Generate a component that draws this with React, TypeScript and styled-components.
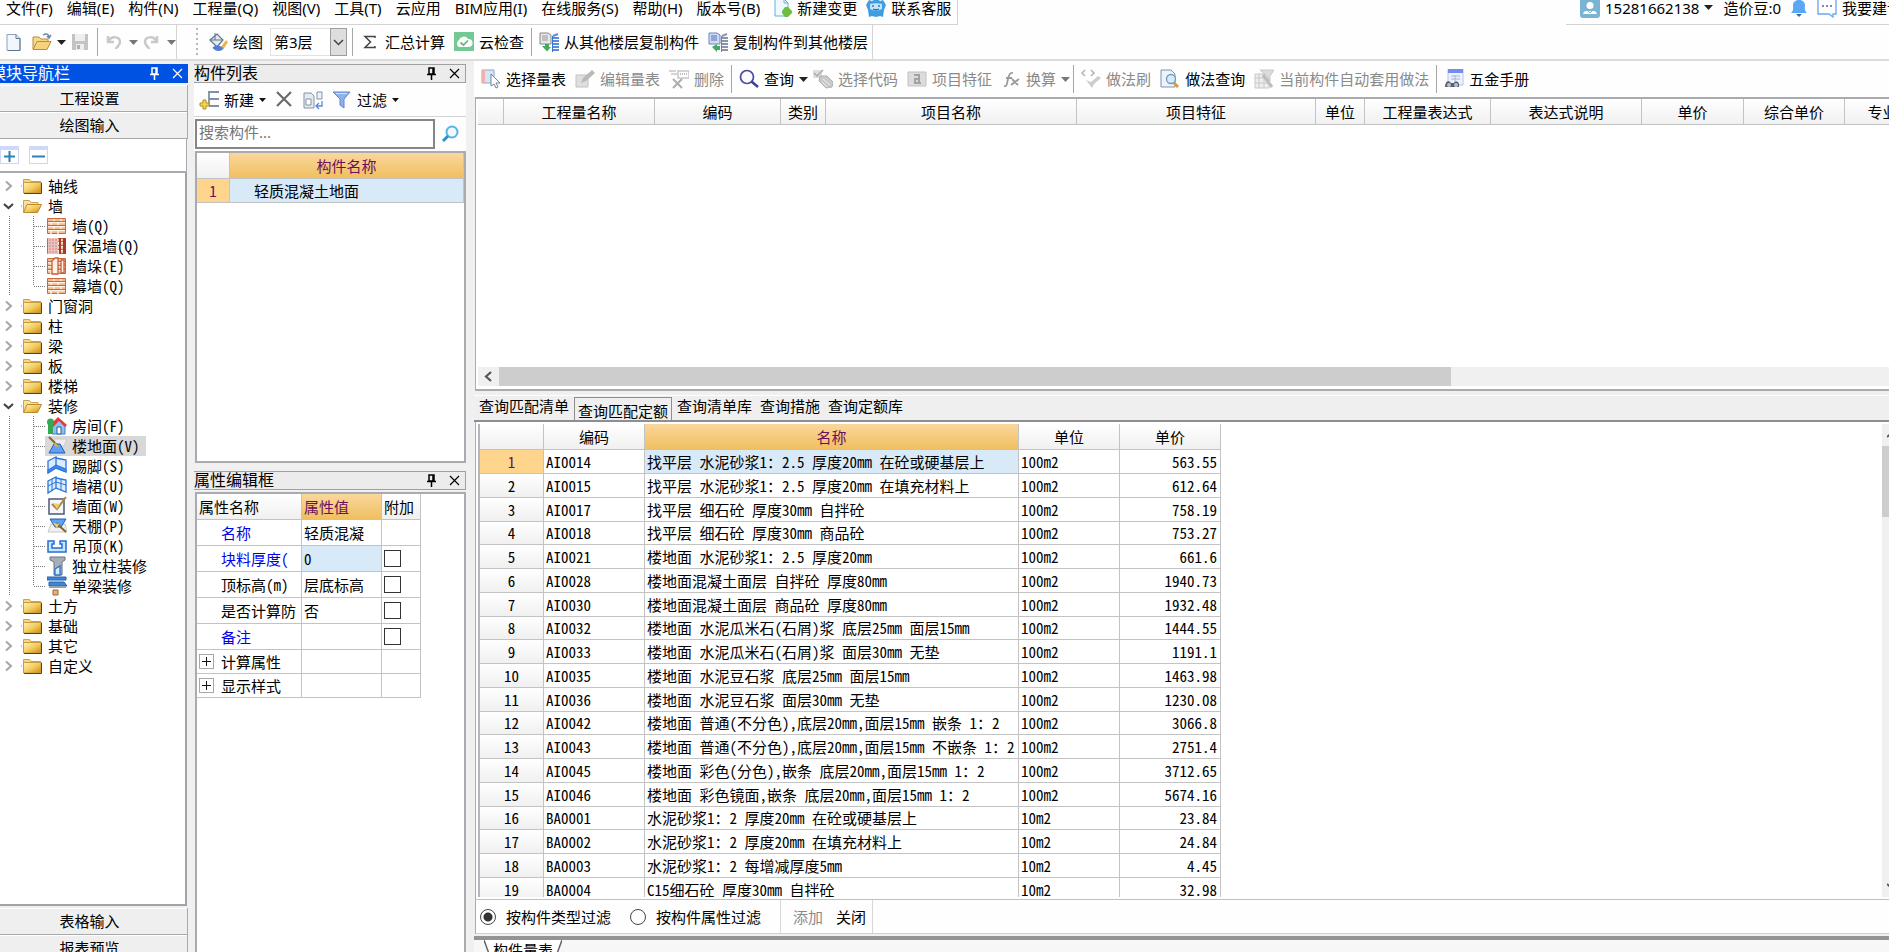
import React, { useState } from "react";
import styled, { createGlobalStyle, css } from "styled-components";

const uiFont = `"Noto Sans", "Noto Sans CJK SC", sans-serif`;
const gridFont = `"Noto Sans Mono CJK SC", "Noto Sans CJK SC", monospace`;

const color = {
  line: "#c3c3c3",
  frame: "#a9abb0",
  chrome: "#f0f0f0",
  paper: "#fefefe",
  amber: "#ffd48c",
  pick: "#d8e9f7",
  plum: "#6b0f5c",
  off: "#8a8a8a",
};

const headFill = "linear-gradient(#ffffff, #f0f0f0)";
const amberFill = "linear-gradient(#fad79c, #f0bf60)";

const GlobalStyle = createGlobalStyle`
  * { box-sizing: border-box; }
  body { margin: 0; background: ${color.chrome}; overflow: hidden; }
  button, input, select { font: inherit; color: inherit; margin: 0; }
  button { border: 0; background: none; padding: 0; white-space: nowrap; }
  svg { display: block; flex: none; }
`;

const Window = styled.div`
  height: 100vh;
  overflow: hidden;
  font: 15px/20px ${uiFont};
  color: #000;
`;

const Frame = styled.div`
  height: calc(100vh + 10px);
  display: flex;
  flex-direction: column;
`;

/* ---------- top bars ---------- */

const MenuRow = styled.header`
  flex: none;
  display: flex;
  justify-content: space-between;
  height: 25px;
  line-height: 16px;
  background: ${color.paper};
`;

const MenuBar = styled.nav`
  display: flex;
  align-items: center;
  padding: 0 6px 9px;
  gap: 14px;
  border: solid #d4d4d4;
  border-width: 0 1px 1px 0;
`;

const MenuButton = styled.button`
  height: 16px;
`;

const MenuTools = styled.div`
  display: flex;
  margin: 0 -4px 0 -7px;
`;

const AccountBar = styled.div`
  display: flex;
  align-items: center;
  gap: 5px;
  width: 323px;
  padding: 0 0 9px 3px;
  border-bottom: 1px solid #d4d4d4;
  white-space: nowrap;
`;

const AccountGrip = styled.span`
  width: 2px;
  height: 16px;
  margin-right: 6px;
  background: repeating-linear-gradient(#b8b8b8 0 2px, transparent 2px 5px);
`;

const AccountItem = styled.button`
  display: flex;
  align-items: center;
  gap: 5px;
  height: 16px;
  margin-right: 5px;
`;

const Bar = styled.div`
  flex: none;
  display: flex;
  height: 36px;
  background: ${color.paper};
  border-bottom: 2px solid #dcdcdc;
`;

const BarGroup = styled.div`
  display: flex;
  align-items: center;
  border-right: 1px solid #d4d4d4;
`;

const Grip = styled.span`
  width: 2px;
  height: 28px;
  margin: 0 5px 0 19px;
  background: repeating-linear-gradient(#b8b8b8 0 2px, transparent 2px 5px);
`;

const Separator = styled.span`
  flex: none;
  width: 1px;
  height: 28px;
  margin: 0 2px 0 3px;
  background: #a6a6a6;
`;

const ToolButton = styled.button<{ $drop?: boolean; $low?: boolean }>`
  display: flex;
  align-items: center;
  gap: 5px;
  height: ${(p) => (p.$low ? 16 : 28)}px;
  padding: 0 ${(p) => (p.$drop ? 0 : 4)}px 0 5px;
  &:disabled { color: ${color.off}; }
`;

const IconButton = styled.button<{ $drop?: boolean }>`
  display: flex;
  align-items: center;
  gap: 5px;
  padding: 0 ${(p) => (p.$drop ? 0 : 4)}px 0 4px;
`;

const FloorPicker = styled.label`
  position: relative;
  margin: 0 2px 0 3px;
  width: 77px;
  height: 28px;
`;

const FloorSelect = styled.select`
  appearance: none;
  width: 100%;
  height: 28px;
  padding: 0 18px 0 3px;
  border: 1px solid #e2e2e2;
  border-radius: 0;
  background: #fff;
`;

const FloorArrow = styled.span`
  position: absolute;
  top: 0;
  right: 0;
  display: grid;
  place-items: center;
  width: 17px;
  height: 28px;
  background: #dedede;
  border: 1px solid #9d9d9d;
  pointer-events: none;
`;

/* ---------- workspace ---------- */

const Workspace = styled.div`
  flex: 1;
  min-height: 0;
  display: flex;
  background: ${color.chrome};
`;

const NavColumn = styled.aside`
  flex: none;
  width: 188px;
  padding-top: 3px;
  display: flex;
  flex-direction: column;
`;

const MidColumn = styled.section`
  flex: none;
  width: 272px;
  margin: 0 8px 0 6px;
  padding-top: 3px;
  display: flex;
  flex-direction: column;
`;

const PanelTitle = styled.div<{ $active?: boolean }>`
  flex: none;
  display: flex;
  align-items: center;
  gap: 12px;
  height: 19px;
  padding-right: 5px;
  font-size: 16px;
  line-height: 17px;
  overflow: hidden;
  white-space: nowrap;
  ${(p) =>
    p.$active
      ? css`
          background: #0053e2;
          color: #fff;
        `
      : css`
          background: #ececec;
          border: 1px solid #a0a0a0;
          border-left: 0;
        `}
`;

const TitleText = styled.h2<{ $shift?: boolean }>`
  flex: 1;
  margin: 0 0 0 ${(p) => (p.$shift ? -10 : 0)}px;
  font: inherit;
`;

const NavSection = styled.button`
  flex: none;
  height: 27px;
  padding-right: 8px;
  text-align: center;
  background: #efefef;
  border: solid #a9a9a9;
  border-width: 0 1px 1px 0;
  box-shadow: inset 0 1px #fff;
`;

const NavTop = styled.div`
  flex: none;
  display: flex;
  flex-direction: column;
  padding-top: 2px;
`;

const FoldBar = styled.div`
  flex: none;
  display: flex;
  align-items: center;
  gap: 10px;
  height: 34px;
  margin-right: 1px;
  background: #fff;
  border: solid #a9abb0;
  border-width: 0 1px 2px 0;
`;

const FoldButton = styled.button`
  display: grid;
  place-items: center;
  width: 19px;
  height: 18px;
  background: #fff;
  border: 1px solid #cdd6fa;
  border-top: 4px solid #cdd8fb;
`;

const Tree = styled.ul`
  flex: 1;
  min-height: 0;
  overflow: hidden;
  margin: 0 1px 2px 0;
  padding: 3px 0 0;
  list-style: none;
  background: #fff;
  border: solid #a0a3aa;
  border-width: 0 2px 2px 0;
  font-family: ${gridFont};
`;

const Branch = styled.button`
  display: flex;
  align-items: center;
  height: 20px;
  padding-left: 3px;
  gap: 6px;
`;

const Twigs = styled.ul`
  margin: 0;
  padding: 0;
  list-style: none;
`;

const Twig = styled.li`
  display: flex;
  height: 20px;
`;

const Leaf = styled.button<{ $on?: boolean }>`
  display: flex;
  align-items: center;
  gap: 5px;
  height: 20px;
  padding: 0 6px 0 2px;
  background: ${(p) => (p.$on ? "#d8d8d8" : "transparent")};
`;

/* ---------- component list and properties ---------- */

const ListTools = styled.div`
  flex: none;
  display: flex;
  align-items: center;
  height: 34px;
  background: ${color.paper};
  border-bottom: 1px solid #d4d4d4;
`;

const SearchRow = styled.form`
  flex: none;
  display: flex;
  align-items: center;
  gap: 6px;
  height: 34px;
  padding-left: 1px;
  background: ${color.paper};
`;

const SearchInput = styled.input`
  width: 240px;
  height: 30px;
  padding: 0 2px 4px;
  border: 2px solid #868686;
  border-radius: 0;
  background: #fff;
  &::placeholder { color: #767676; opacity: 1; }
`;

const ListBox = styled.div`
  flex: none;
  height: 312px;
  margin: 0 0 8px 1px;
  background: #fff;
  border: 2px solid ${color.frame};
`;

const PropertyBox = styled.div`
  flex: 1;
  margin: 2px 0 0 1px;
  background: #fff;
  border: 2px solid ${color.frame};
`;

const Grid = styled.table`
  table-layout: fixed;
  border-collapse: separate;
  border-spacing: 0;
  width: 0;
  font: 15px/20px ${gridFont};
`;

const Head = styled.th<{ $amber?: boolean; $start?: boolean }>`
  height: 26px;
  padding: 0 2px;
  overflow: hidden;
  white-space: nowrap;
  font-weight: 400;
  text-align: ${(p) => (p.$start ? "left" : "center")};
  color: ${(p) => (p.$amber ? color.plum : "#000")};
  background: ${(p) => (p.$amber ? amberFill : headFill)};
  border: solid ${color.line};
  border-width: 0 1px 1px 0;
`;

const Row = styled.tr`
  height: 24px;
`;

const PriceRow = styled(Row)`
  &:nth-child(4n) { height: 23px; }
`;

const PropRow = styled.tr<{ $group?: boolean }>`
  height: ${(p) => (p.$group ? 24 : 26)}px;
`;

const Cell = styled.td<{ $on?: boolean; $end?: boolean; $indent?: boolean; $link?: boolean }>`
  padding: 0 3px 0 ${(p) => (p.$indent ? 24 : 2)}px;
  overflow: hidden;
  white-space: nowrap;
  text-align: ${(p) => (p.$end ? "right" : "left")};
  color: ${(p) => (p.$link ? "#0000f0" : "#000")};
  background: ${(p) => (p.$on ? color.pick : "#fff")};
  border: solid ${color.line};
  border-width: 0 1px 1px 0;
`;

const Index = styled.th<{ $on?: boolean }>`
  padding: 0;
  font-weight: 400;
  text-align: center;
  color: ${(p) => (p.$on ? color.plum : "#000")};
  background: ${(p) => (p.$on ? color.amber : headFill)};
  border: solid ${color.line};
  border-width: 0 1px 1px 0;
`;

const GroupLabel = styled.div`
  display: flex;
  align-items: center;
  gap: 7px;
`;

const Expand = styled.button`
  display: grid;
  place-items: center;
  width: 15px;
  height: 15px;
  background: #fff;
  border: 1px solid #a8a8a8;
`;

const Tick = styled.input`
  appearance: none;
  display: block;
  width: 17px;
  height: 17px;
  background: #fff;
  border: 1px solid #333;
`;

/* ---------- right side ---------- */

const MainColumn = styled.main`
  flex: 1;
  min-width: 0;
  display: flex;
  flex-direction: column;
`;

const MainTools = styled.div`
  flex: none;
  display: flex;
  align-items: center;
  height: 36px;
  padding-left: 2px;
  background: ${color.paper};
  overflow: hidden;
`;

const SheetBox = styled.div`
  flex: none;
  height: 294px;
  display: flex;
  flex-direction: column;
  margin-left: 1px;
  padding-left: 2px;
  background: #fff;
  border: solid ${color.frame};
  border-width: 2px 0 2px 1px;
  overflow: hidden;
`;

const SheetArea = styled.div`
  flex: 1;
  overflow: hidden;
`;

const HScroll = styled.div`
  flex: none;
  display: flex;
  height: 19px;
  margin-bottom: 3px;
  background: ${color.chrome};
`;

const HArrow = styled.button`
  display: grid;
  place-items: center;
  width: 21px;
`;

const HThumb = styled.div`
  width: 67.5%;
  background: #cdcdcd;
`;

const TabStrip = styled.div`
  flex: none;
  display: flex;
  gap: 2px;
  height: 27px;
  margin-top: 4px;
  padding: 0 0 0 2px;
  background: #efefef;
  border-bottom: 2px solid #8e8e92;
  box-shadow: inset 0 1px #fff;
  font-family: ${gridFont};
`;

const Tab = styled.button<{ $on?: boolean }>`
  padding: 0 3px;
  ${(p) =>
    p.$on
      ? css`
          margin-top: 2px;
          padding-top: 3px;
          border: solid #8e8e8e;
          border-width: 1px 1px 0;
        `
      : css`
          padding-bottom: 3px;
        `}
`;

const PriceBox = styled.div`
  flex: 1;
  min-height: 0;
  display: flex;
  justify-content: space-between;
  margin: 0 -11px 0 1px;
  padding: 2px 0 2px 2px;
  background: #fff;
  border-left: 1px solid ${color.frame};
  border-bottom: 1px solid #c0c0c0;
`;

const PriceArea = styled.div`
  border-left: 2px solid #b4b6ba;
  overflow: hidden;
`;

const VScroll = styled.div`
  display: flex;
  flex-direction: column;
  width: 18px;
  background: ${color.chrome};
`;

const VArrow = styled.button`
  display: grid;
  place-items: center;
  height: 22px;
`;

const VThumb = styled.div`
  height: 71px;
  margin-bottom: auto;
  background: #cdcdcd;
`;

const FilterBar = styled.form`
  flex: none;
  display: flex;
  align-items: stretch;
  height: 34px;
  margin-left: 1px;
  padding-left: 4px;
  background: ${color.paper};
  border-left: 1px solid ${color.frame};
  border-bottom: 1px solid #d0d0d0;
  font-family: ${gridFont};
`;

const Choice = styled.label`
  display: flex;
  align-items: center;
  gap: 10px;
  margin-right: 19px;
`;

const Radio = styled.input`
  appearance: none;
  width: 16px;
  height: 16px;
  border: 1px solid #444;
  border-radius: 50%;
  background: #fff;
  &:checked { background: radial-gradient(#333 0 4px, #fff 5px); }
`;

const FilterActions = styled.div`
  display: flex;
  align-items: center;
  gap: 13px;
  padding: 0 6px 0 12px;
  border: solid #d8d8d8;
  border-width: 0 1px;
  font-family: ${uiFont};
`;

const PlainButton = styled.button`
  &:disabled { color: ${color.off}; }
`;

const BottomTabs = styled.div`
  flex: none;
  display: flex;
  height: 26px;
  margin-top: 2px;
  padding-left: 10px;
  background: #f7f7f7;
  border-top: 4px solid #949494;
`;

const BottomTab = styled.button`
  display: flex;
  align-items: flex-start;
  height: 22px;
  font-family: ${gridFont};
`;

const BottomTabText = styled.span`
  height: 22px;
  padding: 0 1px;
  line-height: 20px;
  background: #fff;
`;

/* ---------- drawings ---------- */

const Svg = ({ children, w = 20, h = 20 }: { children: React.ReactNode; w?: number; h?: number }) => (
  <svg width={w} height={h} viewBox={`0 0 ${w} ${h}`} fill="none" aria-hidden="true">
    {children}
  </svg>
);

const Caret = ({ tone = "#222" }) => (
  <Svg w={9} h={5}><path d="M0 0h9L4.500 5z" fill={tone} /></Svg>
);
const SmallCaret = () => (
  <Svg w={7} h={4}><path d="M0 0h7L3.500 4z" fill="#111" /></Svg>
);
const Pin = () => (
  <Svg w={11} h={13}>
    <path d="M3 1h5v6H3zM1 7.500h9M5.500 8v5M7 1v6" stroke="currentColor" strokeWidth="1.500" />
  </Svg>
);
const Cross = () => (
  <Svg w={11} h={11}><path d="M1 1l9 9M10 1l-9 9" stroke="currentColor" strokeWidth="1.200" /></Svg>
);
const Chevron = ({ open }: { open?: boolean }) =>
  open ? (
    <Svg w={11} h={12}><path d="M1 4l4.500 4L10 4" stroke="#444" strokeWidth="2.200" /></Svg>
  ) : (
    <Svg w={11} h={12}><path d="M3 1.500L8 6l-5 4.500" stroke="#a6a6a6" strokeWidth="2" /></Svg>
  );

const Folder = ({ open }: { open?: boolean }) => (
  <Svg w={22} h={18}>
    <defs>
      <linearGradient id="fold" x1="0" y1="0" x2="1" y2="1">
        <stop offset="0" stopColor="#fff3b8" />
        <stop offset=".5" stopColor="#f3cd60" />
        <stop offset="1" stopColor="#d08a10" />
      </linearGradient>
    </defs>
    <path d="M-1 9h4" stroke="#888" strokeDasharray="1 1" />
    {open ? (
      <>
        <path d="M3.500 15V3.500h6l1.500 2h7V8" fill="#f8e19a" stroke="#c9a452" />
        <path d="M3.500 15.500L7 7.500h14.500l-4 8z" fill="url(#fold)" stroke="#b98a2e" />
      </>
    ) : (
      <>
        <path d="M3.500 2.500h6l1.500 2h10v11h-17.500z" fill="#f3d88c" stroke="#c9a452" />
        <path d="M3.500 5.500h17.500v10.500H3.500z" fill="url(#fold)" stroke="#c99b3a" />
        <path d="M4 16.500h17.500V6" stroke="#54451f" />
      </>
    )}
  </Svg>
);

const Guides = ({ last }: { last?: boolean }) => (
  <Svg w={45} h={20}>
    <path d={`M9.500 0V20M33.500 0V${last ? 10 : 20}M34 10.500H45`} stroke="#777" strokeDasharray="1 1" />
  </Svg>
);

const NewDoc = () => (
  <Svg>
    <path d="M3 2.500h9l4 4v12H3z" fill="#f3f7fc" stroke="#8ea3bb" />
    <path d="M12 2.500v4h4v12H4" stroke="#5c7692" />
  </Svg>
);
const OpenDoc = () => (
  <Svg>
    <path d="M1 17V5h6l2 2h7v3" fill="#f5d88b" stroke="#b98f35" />
    <path d="M1 17.500l4-8h14l-4 8z" fill="#f7d27a" stroke="#b98f35" />
    <path d="M11 3c3-2 6-1 6 2M15 4l2 2 2-3" stroke="#6a86a8" strokeWidth="1.500" />
  </Svg>
);
const Disk = () => (
  <Svg>
    <path d="M2 2h16v16H2z" fill="#c4c4c4" />
    <path d="M5 2h10v7H5zM6 12h8v6H6z" fill="#eee" />
    <path d="M7 13h3v4H7z" fill="#b0b0b0" />
  </Svg>
);
const Undo = () => (
  <Svg><path d="M4 4v6h6M5 9c2-5 11-5 11 1 0 4-4 5-4 7" stroke="#c9c9c9" strokeWidth="2.500" /></Svg>
);
const Redo = () => (
  <Svg><path d="M15 4v6H9M14 9C12 4 3 4 3 10c0 4 4 5 4 7" stroke="#c9c9c9" strokeWidth="2.500" /></Svg>
);
const Bucket = () => (
  <Svg>
    <path d="M2 8l7-6 6 6-6 7z" fill="#e3e9ef" stroke="#61758c" strokeWidth="1.200" />
    <path d="M7 1v7M2 8h12" stroke="#61758c" />
    <path d="M12 16l6-8 2 2-5 8z" fill="#e9b552" />
    <path d="M7 14c3-1 6 0 8 2 0 3-5 4-8 2s-3-3 0-4z" fill="#4f7fd0" />
  </Svg>
);
const Sigma = () => (
  <Svg><path d="M15 6V4.500H5l5.500 5.500L5 15.500h10V14" stroke="#444" strokeWidth="1.500" /></Svg>
);
const CloudCheck = () => (
  <Svg>
    <path d="M0 0h20v19H0z" fill="#73c991" />
    <path d="M5 15a4 4 0 010-7 5 5 0 019-1 4 4 0 011 8z" fill="#fff" />
    <path d="M6.500 10.500l3 2.500 4.500-4.500" stroke="#5cb87d" strokeWidth="1.700" />
  </Svg>
);
const FloorCopy = ({ to }: { to?: boolean }) => (
  <Svg>
    <path d="M1 1h8l3 2v9H1z" fill={to ? "#cfdcf5" : "#e8e8e8"} stroke={to ? "#6d83bd" : "#888"} />
    <path d="M3 4h6M3 6h6M3 8h6" stroke={to ? "#5470b5" : "#999"} />
    <path d="M14 4l5-2M14 6h6M14 9h6M14 12h6M14 15h6M14 18h6" stroke={to ? "#8997ab" : "#5b8bd8"} strokeWidth="2" />
    <path d="M13.500 4v16" stroke={to ? "#71839c" : "#3b74cf"} />
    <path d={to ? "M4 15l5-3v2h3v4H9v2z" : "M3 14h3v-2h4v3h2l-4 4.500z"} fill="#43ad5f" />
  </Svg>
);
const DocPlus = () => (
  <Svg>
    <path d="M3 1h9l4 4v13H3z" fill="#eef8ff" stroke="#69aee0" />
    <path d="M12 1v4h4" stroke="#69aee0" />
    <path d="M13 9h3l4 4v2l-4 4h-3l-3-4v-2z" fill="#6cbf3c" />
  </Svg>
);
const Mascot = () => (
  <Svg>
    <path d="M3 2l3 1c3-2 6-2 8 0l3-1 3 5-2 5-1 7-3-1-4 1-4-1-3 1-1-7-2-5z" fill="#3f9ee2" />
    <path d="M4 6c4-1 8-1 12 0v5c-4 2-8 2-12 0z" fill="#bfe4fb" />
    <path d="M7 7v2M13 7v2M7 11c2 1 4 1 6 0" stroke="#1f6cae" strokeWidth="1.300" />
  </Svg>
);
const Avatar = () => (
  <Svg>
    <rect width="20" height="20" rx="3" fill="#7ab4d2" />
    <circle cx="10" cy="7.500" r="3.500" fill="#fff" />
    <path d="M3 16c1-4 4-3 7-3s6-1 7 3z" fill="#fff" />
    <path d="M8 13l2 2 2-2" stroke="#7ab4d2" />
  </Svg>
);
const Bell = () => (
  <Svg w={16}>
    <path d="M0 15c3-3 2-5 2-8 0-3 3-5 6-5s6 2 6 5c0 3-1 5 2 8z" fill="#5aa7f5" />
    <path d="M5 16h6l-3 3z" fill="#3a6ea8" />
  </Svg>
);
const Bubble = () => (
  <Svg>
    <path d="M1 1h18v15h-3v3l-4-3H1z" fill="#fff" stroke="#6aa6ea" strokeWidth="1.300" />
    <path d="M5 8h10" stroke="#555fae" strokeWidth="1.500" strokeDasharray="2 2" />
  </Svg>
);

const PickTable = () => (
  <Svg>
    <path d="M1 1h12v13H1z" fill="#d5e4f7" stroke="#90a7c6" />
    <path d="M1 1h3v13H1z" fill="#edb2ab" />
    <path d="M10 5v12l3-2 2 4 2-1-2-4h4z" fill="#fff" stroke="#71839d" />
  </Svg>
);
const EditTable = () => (
  <Svg>
    <path d="M1 6h12v12H1z" fill="#dedede" stroke="#c2c2c2" />
    <path d="M6 14l2-5 9-8 3 3-9 8z" fill="#b9b9b9" />
  </Svg>
);
const DeleteRow = () => (
  <Svg>
    <path d="M0 2h7M2 5h6M9 2h11v7H9z" stroke="#c6c6c6" strokeWidth="1.500" />
    <path d="M11 5h8" stroke="#bdbdbd" strokeDasharray="1 1" strokeWidth="2" />
    <path d="M4 10l9 9M13 10l-9 9" stroke="#adadad" strokeWidth="2" />
  </Svg>
);
const Lens = () => (
  <Svg>
    <circle cx="8" cy="8" r="6.500" fill="#fafaff" stroke="#4a48a8" strokeWidth="1.700" />
    <path d="M12.500 12.500L19 18" stroke="#3f3f9c" strokeWidth="2.500" />
  </Svg>
);
const PickCode = () => (
  <Svg>
    <path d="M0 1h9v8H0z" fill="#dedede" />
    <path d="M1 4l3 3 6-6" stroke="#aaa" strokeWidth="1.500" />
    <path d="M7 7h7l6 6-1 5-6 1-7-7z" fill="#c9c9c9" stroke="#b0b0b0" />
    <path d="M10 10l7 6M9 13l5 5" stroke="#eee" />
  </Svg>
);
const Feature = () => (
  <Svg>
    <path d="M1 3h18v14H1z" fill="#dcdcdc" stroke="#c2c2c2" />
    <path d="M7 6h5v8H8v-4h4M12 14h2" stroke="#a2a2a2" strokeWidth="2" />
  </Svg>
);
const Fx = () => (
  <Svg>
    <path d="M3 17c3 1 3-3 4-7s2-7 5-6M5 9h6M11 10l6 6M18 10l-8 6" stroke="#9a9a9a" strokeWidth="1.800" />
  </Svg>
);
const Brush = () => (
  <Svg>
    <path d="M4 1L1 4l3 3M10 1l3 3-3 3" stroke="#b3b3b3" strokeWidth="1.500" />
    <path d="M5 11l5 2 7-6 3 2-7 6-2 4z" fill="#cdcdcd" />
  </Svg>
);
const DocLens = () => (
  <Svg>
    <path d="M1 1h10l4 4v13H1z" fill="#edf3fb" stroke="#7d93b0" />
    <circle cx="11" cy="10" r="4.500" fill="#d4ecfb" stroke="#7896b5" strokeWidth="1.300" />
    <path d="M14 14l4 4" stroke="#e09a35" strokeWidth="3" />
  </Svg>
);
const AutoApply = () => (
  <Svg>
    <path d="M1 5h14v14H1zM1 9h14M1 14h14M5 5v14M10 5v14" fill="#eee" stroke="#c8c8c8" />
    <path d="M6 1h14l-4 6v5l-3-5z" fill="#dcdcdc" stroke="#c8c8c8" />
    <path d="M9 6l9 12" stroke="#bcbcbc" strokeWidth="3" />
  </Svg>
);
const Manual = () => (
  <Svg>
    <path d="M4 0h15v16H4z" fill="#eef2ff" stroke="#b6c2ee" />
    <path d="M4 0h15v4H4z" fill="#6f8ff0" />
    <path d="M7 7h9M7 10h9M11 6v8" stroke="#a8b2d0" />
    <path d="M1 18c0-6 4-7 6-4h3c2-3 6-1 5 4z" fill="#58606c" />
    <circle cx="5" cy="16" r="2" fill="#b9c2cd" /><circle cx="12" cy="16" r="2" fill="#b9c2cd" />
  </Svg>
);
const AddItem = () => (
  <Svg>
    <path d="M9 2h11M10 2v14M10 9h10M10 16h10" stroke="#7d92a8" strokeWidth="1.800" />
    <path d="M4 10h3v3h3v3H7v3H4v-3H1v-3h3z" fill="#f5d44c" stroke="#b18e20" />
  </Svg>
);
const BigCross = () => (
  <Svg><path d="M3 2l14 14M17 2L3 16" stroke="#6b6b6b" strokeWidth="2.200" /></Svg>
);
const CopyDoc = () => (
  <Svg>
    <path d="M1 3h7l3 3v12H1z" fill="#e6eaf0" stroke="#8493a6" />
    <path d="M3 9h5v6H3z" fill="#fff" stroke="#8493a6" />
    <path d="M14 2h5v7h-5z" fill="#eef1f6" stroke="#8493a6" />
    <path d="M19 11v5h-5M16 13l-3 3 3 3" stroke="#5c88d8" strokeWidth="1.300" />
  </Svg>
);
const Funnel = () => (
  <Svg>
    <path d="M1 2h17l-6 7v9l-4-3V9z" fill="#8fb2ec" stroke="#5c86cc" />
    <path d="M4 3.500h11" stroke="#d2e1fa" />
  </Svg>
);
const BlueLens = () => (
  <Svg>
    <circle cx="11" cy="8" r="5.500" stroke="#56b2e8" strokeWidth="2" fill="#eef9ff" />
    <path d="M7 12l-5 5" stroke="#2f8fcf" strokeWidth="3" />
  </Svg>
);

const Bricks = ({ kind = 0 }: { kind?: number }) => (
  <Svg>
    <path d="M.5 2.500h18v15H.5z" fill="#f6b98f" stroke="#c9683c" />
    <path d="M1 6.500h17M1 10.500h17M1 14.500h17M7 3v3M14 3v3M4 7v3M11 7v3M7 11v3M14 11v3M4 15v3M11 15v3" stroke="#fff3e6" strokeWidth="1.400" />
    <path d="M1 5.500h17M1 9.500h17M1 13.500h17" stroke="#c9683c" />
    {kind === 1 && (
      <>
        <path d="M1 2h10v16H1z" fill="#eec1c1" />
        <path d="M2 4h8M2 7h8M2 10h8M2 13h8M2 16h8" stroke="#c88" strokeDasharray="2 1" />
        <path d="M12 2h2v16h-2zM16 2h3v16h-3z" fill="#a83a2c" />
      </>
    )}
    {kind === 2 && <path d="M5 5l3-3h3v16H5zM14 4h3v13h-3z" fill="#fff2e8" stroke="#c85c30" strokeWidth="1.300" />}
  </Svg>
);
const House = () => (
  <Svg>
    <path d="M5 8l6-5 7 6v9H5z" fill="#8fc2f2" stroke="#3f7fc4" />
    <path d="M4 8l7-7 9 8-2 2-6-6-6 6z" fill="#e0383b" />
    <path d="M10 11h4v7h-4z" fill="#fff" stroke="#2b5d9c" />
    <circle cx="3.500" cy="6" r="3.500" fill="#35a854" /><path d="M1 8h5v10H1z" fill="#35a854" />
  </Svg>
);
const Floor = () => (
  <Svg>
    <path d="M7 3h13l-3 7H9z" fill="#eee" stroke="#ccc" />
    <path d="M2 17l5-9h6l5 9z" fill="#5ea2f4" stroke="#1d5fb8" />
    <path d="M2 1l8 8" stroke="#8a6426" strokeWidth="2" /><path d="M8 6l4 5-5-1z" fill="#e5b23a" />
  </Svg>
);
const Skirt = ({ half }: { half?: boolean }) => (
  <Svg>
    <path d="M1 5l8-4v11l-8 5zM9 2l10 2v12L9 12z" fill="#dcecff" stroke="#2b74d6" strokeWidth="1.300" />
    <path d={half ? "M1 10l8-4 10 3M5 3v12M14 3v11" : "M1 17v-3l8-5 10 4v3L9 12z"} fill={half ? "none" : "#3f8af0"} stroke="#2b74d6" />
  </Svg>
);
const WallFace = () => (
  <Svg>
    <path d="M2 3h15v15H2z" fill="#f5f5fb" stroke="#4c5874" strokeWidth="1.500" />
    <path d="M5 8l5 5 9-12" stroke="#a8853a" strokeWidth="2" /><path d="M6 7l4 6 3-5z" fill="#ecd06a" />
  </Svg>
);
const Ceiling = () => (
  <Svg>
    <path d="M1 16l3-8h14l2 8z" fill="#f0f0f0" stroke="#c8c8c8" />
    <path d="M3 3h16l-5 8H8z" fill="#5ea2f4" stroke="#1d5fb8" />
    <path d="M9 7l10 9" stroke="#8a6426" strokeWidth="2" /><path d="M6 7l6 1-2 4z" fill="#ecd06a" />
  </Svg>
);
const Hung = () => (
  <Svg>
    <path d="M1 5h6v3H5v4h10V8h-2V5h6v11H1z" fill="#cfe4ff" stroke="#1f6fd2" strokeWidth="1.500" />
  </Svg>
);
const Column = () => (
  <Svg>
    <path d="M3 1h15v3l-3 2v13H7V6L3 4z" fill="#a7aeb7" stroke="#6d747d" />
    <path d="M8 13l5-3v9H8z" fill="#d8e9ff" stroke="#2b74d6" strokeWidth="1.300" />
  </Svg>
);
const Beam = () => (
  <Svg>
    <path d="M0 1h19v3H0zM2 6h15l3 4H2z" fill="#3f86d8" stroke="#2563ac" />
    <path d="M2 11h17" stroke="#9aa2ac" strokeWidth="2" />
    <path d="M6 14h5v5H6z" fill="#e7b27b" stroke="#9c6732" />
  </Svg>
);

/* ---------- data ---------- */

const menus = ["文件(F)", "编辑(E)", "构件(N)", "工程量(Q)", "视图(V)", "工具(T)", "云应用", "BIM应用(I)", "在线服务(S)", "帮助(H)", "版本号(B)"];

type Node = { name: string; kids?: [string, React.ReactNode][] };
const tree: Node[] = [
  { name: "轴线" },
  { name: "墙", kids: [["墙(Q)", <Bricks />], ["保温墙(Q)", <Bricks kind={1} />], ["墙垛(E)", <Bricks kind={2} />], ["幕墙(Q)", <Bricks />]] },
  { name: "门窗洞" },
  { name: "柱" },
  { name: "梁" },
  { name: "板" },
  { name: "楼梯" },
  {
    name: "装修",
    kids: [
      ["房间(F)", <House />], ["楼地面(V)", <Floor />], ["踢脚(S)", <Skirt />], ["墙裙(U)", <Skirt half />], ["墙面(W)", <WallFace />],
      ["天棚(P)", <Ceiling />], ["吊顶(K)", <Hung />], ["独立柱装修", <Column />], ["单梁装修", <Beam />],
    ],
  },
  { name: "土方" },
  { name: "基础" },
  { name: "其它" },
  { name: "自定义" },
];

const sheetCols: [string, number][] = [
  ["", 26], ["工程量名称", 151], ["编码", 126], ["类别", 45], ["项目名称", 251], ["项目特征", 239], ["单位", 49],
  ["工程量表达式", 126], ["表达式说明", 151], ["单价", 102], ["综合单价", 101], ["专业", 76],
];

const prices: [string, string, string, string][] = [
  ["AI0014", "找平层 水泥砂浆1：2.5 厚度20mm 在砼或硬基层上", "100m2", "563.55"],
  ["AI0015", "找平层 水泥砂浆1：2.5 厚度20mm 在填充材料上", "100m2", "612.64"],
  ["AI0017", "找平层 细石砼 厚度30mm 自拌砼", "100m2", "758.19"],
  ["AI0018", "找平层 细石砼 厚度30mm 商品砼", "100m2", "753.27"],
  ["AI0021", "楼地面 水泥砂浆1：2.5 厚度20mm", "100m2", "661.6"],
  ["AI0028", "楼地面混凝土面层 自拌砼 厚度80mm", "100m2", "1940.73"],
  ["AI0030", "楼地面混凝土面层 商品砼 厚度80mm", "100m2", "1932.48"],
  ["AI0032", "楼地面 水泥瓜米石(石屑)浆 底层25mm 面层15mm", "100m2", "1444.55"],
  ["AI0033", "楼地面 水泥瓜米石(石屑)浆 面层30mm 无垫", "100m2", "1191.1"],
  ["AI0035", "楼地面 水泥豆石浆 底层25mm 面层15mm", "100m2", "1463.98"],
  ["AI0036", "楼地面 水泥豆石浆 面层30mm 无垫", "100m2", "1230.08"],
  ["AI0042", "楼地面 普通(不分色),底层20mm,面层15mm 嵌条 1：2", "100m2", "3066.8"],
  ["AI0043", "楼地面 普通(不分色),底层20mm,面层15mm 不嵌条 1：2", "100m2", "2751.4"],
  ["AI0045", "楼地面 彩色(分色),嵌条 底层20mm,面层15mm 1：2", "100m2", "3712.65"],
  ["AI0046", "楼地面 彩色镜面,嵌条 底层20mm,面层15mm 1：2", "100m2", "5674.16"],
  ["BA0001", "水泥砂浆1：2 厚度20mm 在砼或硬基层上", "10m2", "23.84"],
  ["BA0002", "水泥砂浆1：2 厚度20mm 在填充材料上", "10m2", "24.84"],
  ["BA0003", "水泥砂浆1：2 每增减厚度5mm", "10m2", "4.45"],
  ["BA0004", "C15细石砼 厚度30mm 自拌砼", "10m2", "32.98"],
];

const props: { name: string; value: string; link?: boolean; tick?: boolean; on?: boolean; group?: boolean }[] = [
  { name: "名称", value: "轻质混凝", link: true },
  { name: "块料厚度(", value: "0", link: true, tick: true, on: true },
  { name: "顶标高(m)", value: "层底标高", tick: true },
  { name: "是否计算防", value: "否", tick: true },
  { name: "备注", value: "", link: true, tick: true },
  { name: "计算属性", value: "", group: true },
  { name: "显示样式", value: "", group: true },
];

const tabs = ["查询匹配清单", "查询匹配定额", "查询清单库", "查询措施", "查询定额库"];

const Cols = ({ widths }: { widths: number[] }) => (
  <colgroup>{widths.map((w, i) => <col key={i} width={w} />)}</colgroup>
);

const Title = ({ text, active }: { text: string; active?: boolean }) => (
  <PanelTitle $active={active}>
    <TitleText $shift={active}>{text}</TitleText>
    <button aria-label="固定"><Pin /></button>
    <button aria-label="关闭面板"><Cross /></button>
  </PanelTitle>
);

export default function App() {
  const [leaf, setLeaf] = useState("楼地面(V)");
  const [tab, setTab] = useState("查询匹配定额");

  return (
    <Window>
      <GlobalStyle />
      <Frame>
        <MenuRow>
          <MenuBar>
            {menus.map((m) => <MenuButton key={m}>{m}</MenuButton>)}
            <MenuTools>
              <ToolButton $low><DocPlus />新建变更</ToolButton>
              <ToolButton $low><Mascot />联系客服</ToolButton>
            </MenuTools>
          </MenuBar>
          <AccountBar>
            <AccountGrip />
            <AccountItem><Avatar />15281662138<Caret /></AccountItem>
            <AccountItem>造价豆:0</AccountItem>
            <AccountItem aria-label="通知"><Bell /></AccountItem>
            <AccountItem><Bubble />我要建议</AccountItem>
          </AccountBar>
        </MenuRow>

        <Bar>
          <BarGroup>
            <IconButton aria-label="新建"><NewDoc /></IconButton>
            <IconButton aria-label="打开" $drop><OpenDoc /><Caret /></IconButton>
            <IconButton aria-label="保存"><Disk /></IconButton>
            <Separator />
            <IconButton aria-label="撤销" $drop><Undo /><Caret tone="#777" /></IconButton>
            <IconButton aria-label="恢复" $drop><Redo /><Caret tone="#777" /></IconButton>
          </BarGroup>
          <BarGroup>
            <Grip />
            <ToolButton><Bucket />绘图</ToolButton>
            <FloorPicker>
              <FloorSelect aria-label="楼层"><option>第3层</option></FloorSelect>
              <FloorArrow><Svg w={11} h={7}><path d="M1 1l4.500 4.500L10 1" stroke="#444" strokeWidth="1.500" /></Svg></FloorArrow>
            </FloorPicker>
            <Separator />
            <ToolButton><Sigma />汇总计算</ToolButton>
            <ToolButton><CloudCheck />云检查</ToolButton>
            <Separator />
            <ToolButton><FloorCopy />从其他楼层复制构件</ToolButton>
            <ToolButton><FloorCopy to />复制构件到其他楼层</ToolButton>
          </BarGroup>
        </Bar>

        <Workspace>
          <NavColumn>
            <Title text="模块导航栏" active />
            <NavTop>
              <NavSection>工程设置</NavSection>
              <NavSection>绘图输入</NavSection>
            </NavTop>
            <FoldBar>
              <FoldButton aria-label="全部展开"><Svg w={11} h={11}><path d="M5.500 0v11M0 5.500h11" stroke="#2f80b8" strokeWidth="2" /></Svg></FoldButton>
              <FoldButton aria-label="全部折叠"><Svg w={13} h={11}><path d="M0 5.500h13" stroke="#2f80b8" strokeWidth="2" /></Svg></FoldButton>
            </FoldBar>
            <Tree>
              {tree.map((n) => (
                <li key={n.name}>
                  <Branch aria-expanded={!!n.kids}>
                    <Chevron open={!!n.kids} />
                    <Folder open={!!n.kids} />
                    {n.name}
                  </Branch>
                  {n.kids && (
                    <Twigs>
                      {n.kids.map(([name, icon], i) => (
                        <Twig key={name}>
                          <Guides last={i === n.kids!.length - 1} />
                          <Leaf $on={leaf === name} onClick={() => setLeaf(name)}>{icon}{name}</Leaf>
                        </Twig>
                      ))}
                    </Twigs>
                  )}
                </li>
              ))}
            </Tree>
            <NavSection>表格输入</NavSection>
            <NavSection>报表预览</NavSection>
          </NavColumn>

          <MidColumn>
            <Title text="构件列表" />
            <ListTools>
              <ToolButton><AddItem />新建<SmallCaret /></ToolButton>
              <IconButton aria-label="删除构件"><BigCross /></IconButton>
              <ToolButton aria-label="复制构件"><CopyDoc /></ToolButton>
              <ToolButton><Funnel />过滤<SmallCaret /></ToolButton>
            </ListTools>
            <SearchRow onSubmit={(e) => e.preventDefault()}>
              <SearchInput aria-label="搜索构件" placeholder="搜索构件..." />
              <button aria-label="搜索"><BlueLens /></button>
            </SearchRow>
            <ListBox>
              <Grid>
                <Cols widths={[33, 234]} />
                <thead><tr><Head /><Head $amber>构件名称</Head></tr></thead>
                <tbody><Row><Index $on>1</Index><Cell $on $indent>轻质混凝土地面</Cell></Row></tbody>
              </Grid>
            </ListBox>
            <Title text="属性编辑框" />
            <PropertyBox>
              <Grid>
                <Cols widths={[105, 80, 39]} />
                <thead><tr><Head $start>属性名称</Head><Head $start $amber>属性值</Head><Head $start>附加</Head></tr></thead>
                <tbody>
                  {props.map((p) => (
                    <PropRow key={p.name} $group={p.group}>
                      <Cell $indent={!p.group} $link={p.link}>
                        {p.group ? (
                          <GroupLabel>
                            <Expand aria-label={`展开${p.name}`}><Svg w={9} h={9}><path d="M4.500 0v9M0 4.500h9" stroke="#111" /></Svg></Expand>
                            {p.name}
                          </GroupLabel>
                        ) : p.name}
                      </Cell>
                      <Cell $on={p.on}>{p.value}</Cell>
                      <Cell>{p.tick && <Tick type="checkbox" aria-label={`附加 ${p.name}`} />}</Cell>
                    </PropRow>
                  ))}
                </tbody>
              </Grid>
            </PropertyBox>
          </MidColumn>

          <MainColumn>
            <MainTools>
              <ToolButton><PickTable />选择量表</ToolButton>
              <ToolButton disabled><EditTable />编辑量表</ToolButton>
              <ToolButton disabled><DeleteRow />删除</ToolButton>
              <Separator />
              <ToolButton $drop><Lens />查询<Caret /></ToolButton>
              <ToolButton disabled><PickCode />选择代码</ToolButton>
              <ToolButton disabled><Feature />项目特征</ToolButton>
              <ToolButton disabled $drop><Fx />换算<Caret tone="#777" /></ToolButton>
              <Separator />
              <ToolButton disabled><Brush />做法刷</ToolButton>
              <ToolButton><DocLens />做法查询</ToolButton>
              <ToolButton disabled><AutoApply />当前构件自动套用做法</ToolButton>
              <Separator />
              <ToolButton><Manual />五金手册</ToolButton>
            </MainTools>

            <SheetBox>
              <SheetArea>
                <Grid>
                  <Cols widths={sheetCols.map((c) => c[1])} />
                  <thead><tr>{sheetCols.map(([name]) => <Head key={name}>{name}</Head>)}</tr></thead>
                </Grid>
              </SheetArea>
              <HScroll>
                <HArrow aria-label="向左滚动"><Svg w={9} h={11}><path d="M7 1L2 5.500 7 10" stroke="#555" strokeWidth="2.200" /></Svg></HArrow>
                <HThumb />
              </HScroll>
            </SheetBox>

            <TabStrip role="tablist">
              {tabs.map((t) => (
                <Tab key={t} role="tab" aria-selected={t === tab} $on={t === tab} onClick={() => setTab(t)}>{t}</Tab>
              ))}
            </TabStrip>

            <PriceBox>
              <PriceArea>
                <Grid>
                  <Cols widths={[64, 101, 374, 101, 101]} />
                  <thead><tr><Head /><Head>编码</Head><Head $amber>名称</Head><Head>单位</Head><Head>单价</Head></tr></thead>
                  <tbody>
                    {prices.map(([code, name, unit, price], i) => (
                      <PriceRow key={code}>
                        <Index $on={i === 0}>{i + 1}</Index>
                        <Cell>{code}</Cell>
                        <Cell $on={i === 0}>{name}</Cell>
                        <Cell>{unit}</Cell>
                        <Cell $end>{price}</Cell>
                      </PriceRow>
                    ))}
                  </tbody>
                </Grid>
              </PriceArea>
              <VScroll>
                <VArrow aria-label="向上滚动"><Svg w={9} h={6}><path d="M0 5l4.500-4L9 5" stroke="#555" strokeWidth="2" /></Svg></VArrow>
                <VThumb />
                <VArrow aria-label="向下滚动"><Svg w={9} h={6}><path d="M0 1l4.500 4L9 1" stroke="#555" strokeWidth="2" /></Svg></VArrow>
              </VScroll>
            </PriceBox>

            <FilterBar onSubmit={(e) => e.preventDefault()}>
              <Choice><Radio type="radio" name="filter" defaultChecked />按构件类型过滤</Choice>
              <Choice><Radio type="radio" name="filter" />按构件属性过滤</Choice>
              <FilterActions>
                <PlainButton type="button" disabled>添加</PlainButton>
                <PlainButton type="button">关闭</PlainButton>
              </FilterActions>
            </FilterBar>

            <BottomTabs>
              <BottomTab>
                <Svg w={8} h={22}><path d="M0 0h8v22z" fill="#fff" /><path d="M0 0l8 22" stroke="#666" strokeWidth="1.500" /></Svg>
                <BottomTabText>构件量表</BottomTabText>
                <Svg w={8} h={22}><path d="M0 0h8L0 22z" fill="#fff" /><path d="M8 0L0 22" stroke="#666" strokeWidth="1.500" /></Svg>
              </BottomTab>
            </BottomTabs>
          </MainColumn>
        </Workspace>
      </Frame>
    </Window>
  );
}
